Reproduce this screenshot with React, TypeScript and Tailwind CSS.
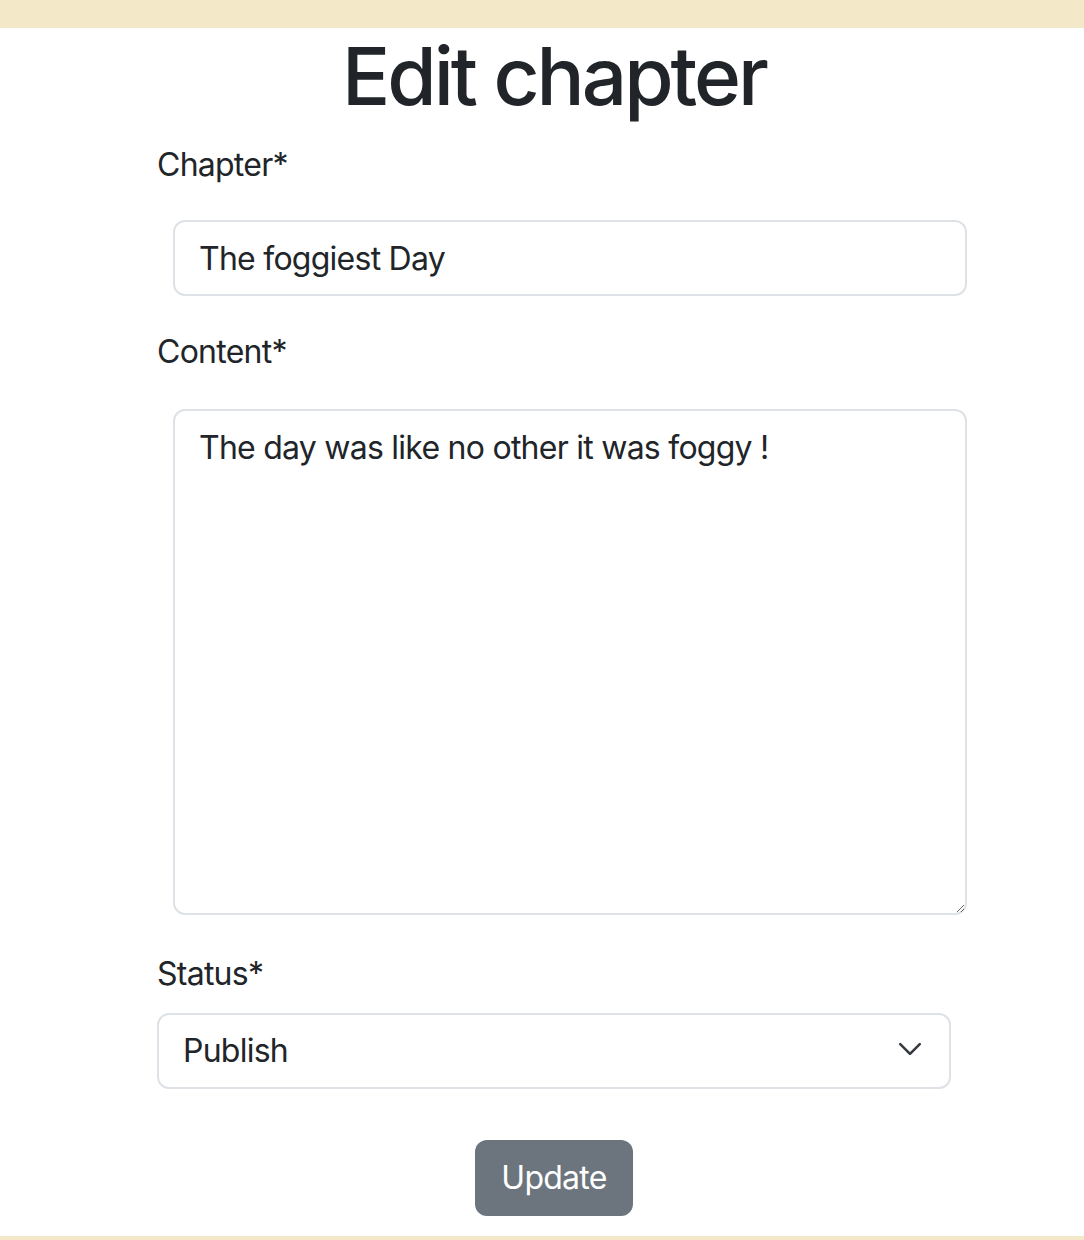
import React from "react";

const font = { fontFamily: "Inter, 'Noto Sans', sans-serif" };

const EditChapter = () => {
  return (
    <div className="min-h-[1240px] bg-white text-[#212529] flex flex-col tracking-[-0.75px]" style={font}>
      <div className="h-[28px] bg-[#f3e9c9]" />

      <div className="ml-[157px] w-[794px] flex flex-col">
        <h1 className="text-[80px] leading-[96px] font-medium text-center tracking-[-3px] mb-[16px]">
          Edit chapter
        </h1>

        <label className="text-[32px] leading-[48px] mt-[1px]">Chapter*</label>
        <input
          className="mt-[31px] ml-[16px] w-[794px] h-[76px] px-[24px] text-[32px] leading-[48px] border-2 border-[#dee2e6] rounded-[12px] outline-none"
          defaultValue="The foggiest Day"
        />

        <label className="text-[32px] leading-[48px] mt-[32px]">Content*</label>
        <textarea
          className="mt-[33px] ml-[16px] w-[794px] h-[506px] px-[24px] pt-[13px] pb-[10px] text-[32px] leading-[48px] border-2 border-[#dee2e6] rounded-[12px] outline-none resize-y"
          defaultValue="The day was like no other it was foggy !"
        />

        <label className="text-[32px] leading-[48px] mt-[35px]">Status*</label>
        <div className="relative mt-[15px] w-[794px] h-[76px]">
          <select
            className="appearance-none w-full h-full pl-[24px] pr-[72px] text-[32px] leading-[48px] border-2 border-[#dee2e6] rounded-[12px] bg-white outline-none"
            defaultValue="publish"
          >
            <option value="publish">Publish</option>
            <option value="draft">Draft</option>
          </select>
          <svg
            className="absolute right-[28px] top-[23px] pointer-events-none"
            width="26"
            height="26"
            viewBox="0 0 16 16"
            fill="none"
            stroke="#343a40"
            strokeWidth="1.6"
            strokeLinecap="round"
            strokeLinejoin="round"
          >
            <path d="m2 5 6 6 6-6" />
          </svg>
        </div>

        <div className="flex justify-center mt-[51px]">
          <button className="h-[76px] px-[26px] bg-[#6c757d] text-white text-[32px] leading-[48px] rounded-[12px]">
            Update
          </button>
        </div>
      </div>

      <div className="mt-[20px] h-[12px] bg-[#f3e9c9]" />
    </div>
  );
};

export default function App() {
  return <EditChapter />;
}
